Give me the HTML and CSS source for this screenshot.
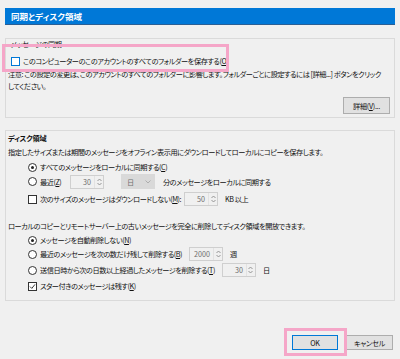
FILE: index.html
```html
<!DOCTYPE html>
<html lang="ja">
<head>
    <meta charset="UTF-8">
    <title>同期とディスク領域</title>
    <link rel="stylesheet" href="styles.css">
</head>
<body>
    <div class="dialog">
        <div class="titlebar">同期とディスク領域</div>

        <!-- メッセージの同期 -->
        <section class="panel panel-sync">
            <div class="panel-title indent">メッセージの同期</div>
            <div class="row check-row indent">
                <span class="checkbox focus"></span>
                <span>このコンピューターのこのアカウントのすべてのフォルダーを保存する(<u>O</u>)</span>
            </div>
            <p class="note">注意: この設定の変更は、このアカウントのすべてのフォルダーに影響します。フォルダーごとに設定するには [詳細...] ボタンをクリック<br>してください。</p>
            <div class="actions">
                <button class="btn">詳細(<u>V</u>)...</button>
            </div>
        </section>

        <!-- ディスク領域 -->
        <section class="panel panel-disk">
            <div class="panel-title bold">ディスク領域</div>
            <div class="line">指定したサイズまたは期間のメッセージをオフライン表示用にダウンロードしてローカルにコピーを保存します。</div>

            <div class="row opt opt-first">
                <span class="radio checked"></span>
                <span>すべてのメッセージをローカルに同期する(<u>C</u>)</span>
            </div>
            <div class="row opt opt-recent">
                <span class="radio"></span>
                <span class="lbl-recent">最近(<u>Z</u>)</span>
                <span class="spin"><span class="spin-val">30</span><span class="spin-arrows"><svg width="5" height="8" viewBox="0 0 5 8"><path d="M0.5 3 L2.5 1 L4.5 3 M0.5 5 L2.5 7 L4.5 5" fill="none" stroke="#8a8a8a" stroke-width="0.9"/></svg></span></span>
                <span class="combo">日<svg width="6" height="4" viewBox="0 0 6 4"><path d="M0.5 0.5 L3 3 L5.5 0.5" fill="none" stroke="#a8a8a8" stroke-width="0.9"/></svg></span>
                <span class="after-combo">分のメッセージをローカルに同期する</span>
            </div>
            <div class="row opt opt-size">
                <span class="checkbox"></span>
                <span>次のサイズのメッセージはダウンロードしない(<u>M</u>):</span>
                <span class="spin"><span class="spin-val">50</span><span class="spin-arrows"><svg width="5" height="8" viewBox="0 0 5 8"><path d="M0.5 3 L2.5 1 L4.5 3 M0.5 5 L2.5 7 L4.5 5" fill="none" stroke="#8a8a8a" stroke-width="0.9"/></svg></span></span>
                <span class="unit">KB 以上</span>
            </div>

            <div class="line line-purge">ローカルのコピーとリモートサーバー上の古いメッセージを完全に削除してディスク領域を開放できます。</div>

            <div class="row opt">
                <span class="radio checked"></span>
                <span>メッセージを自動削除しない(<u>N</u>)</span>
            </div>
            <div class="row opt opt-keep">
                <span class="radio"></span>
                <span>最近のメッセージを次の数だけ残して削除する(<u>B</u>)</span>
                <span class="spin spin-gap"><span class="spin-val">2000</span><span class="spin-arrows"><svg width="5" height="8" viewBox="0 0 5 8"><path d="M0.5 3 L2.5 1 L4.5 3 M0.5 5 L2.5 7 L4.5 5" fill="none" stroke="#8a8a8a" stroke-width="0.9"/></svg></span></span>
                <span class="unit">週</span>
            </div>
            <div class="row opt opt-days">
                <span class="radio"></span>
                <span>送信日時から次の日数以上経過したメッセージを削除する(<u>T</u>)</span>
                <span class="spin spin-gap"><span class="spin-val">30</span><span class="spin-arrows"><svg width="5" height="8" viewBox="0 0 5 8"><path d="M0.5 3 L2.5 1 L4.5 3 M0.5 5 L2.5 7 L4.5 5" fill="none" stroke="#8a8a8a" stroke-width="0.9"/></svg></span></span>
                <span class="unit">日</span>
            </div>
            <div class="row opt opt-star">
                <span class="checkbox"><svg width="7" height="7" viewBox="0 0 7 7"><path d="M1 3.6 L2.8 5.4 L6 1.4" fill="none" stroke="#222" stroke-width="0.9"/></svg></span>
                <span>スター付きのメッセージは残す(<u>K</u>)</span>
            </div>
        </section>

        <div class="footer">
            <button class="btn btn-default">OK</button>
            <button class="btn">キャンセル</button>
        </div>

        <!-- 注目枠 -->
        <div class="highlight hl-sync"></div>
        <div class="highlight hl-ok"></div>
    </div>
</body>
</html>
```

FILE: styles.css
```css
:root {
    --bg-color: #f0f0f0;
    --accent-color: #0078d7;
    --border-color: #dadada;
    --text-color: #111;
    --pink: #f5a6c8;
}

body {
    margin: 0;
    background-color: var(--bg-color);
    color: var(--text-color);
    font-family: "Noto Sans CJK JP", "Noto Sans", sans-serif;
    font-size: 7.2px;
    letter-spacing: -0.45px;
    font-feature-settings: "palt";
}

.dialog {
    position: relative;
    width: 400px;
    height: 359px;
    padding: 8px 5px 0;
    box-sizing: border-box;
}

.titlebar {
    height: 17px;
    line-height: 17px;
    padding-left: 6px;
    background-color: var(--accent-color);
    border-bottom: 1px solid #2a5f95;
    box-sizing: border-box;
    color: white;
    font-weight: bold;
    font-size: 8.5px;
    letter-spacing: 0;
}

.panel {
    border: 1px solid var(--border-color);
    padding: 0 4px 0 2px;
}

.panel-sync {
    margin-top: 13px;
    height: 80px;
    box-sizing: border-box;
}

.panel-disk {
    margin-top: 12px;
    height: 171px;
    box-sizing: border-box;
}

.panel-title {
    line-height: 11px;
}

.panel-disk .panel-title {
    line-height: 14px;
}

.bold {
    font-weight: bold;
    letter-spacing: -0.2px;
}

.indent {
    margin-left: 3px;
}

.row {
    display: flex;
    align-items: center;
    gap: 3px;
    height: 14px;
    white-space: nowrap;
}

.check-row {
    margin-top: 4px;
}

.note {
    margin: 0;
    line-height: 12px;
    white-space: nowrap;
}

.actions {
    display: flex;
    justify-content: flex-end;
    margin-top: 5px;
}

.line {
    line-height: 14px;
    white-space: nowrap;
}

.line-purge {
    margin-top: 13px;
}

.opt {
    margin-left: 20px;
}

.opt-first {
    margin-top: 1px;
}

.opt-recent {
    height: 15px;
}

.opt-size {
    margin-top: 3px;
}

.opt-days,
.opt-star {
    margin-top: 2px;
}

.checkbox {
    display: inline-flex;
    align-items: center;
    justify-content: center;
    width: 7px;
    height: 7px;
    border: 1px solid #333;
    background: white;
    box-sizing: content-box;
    flex-shrink: 0;
}

.checkbox.focus {
    border-color: var(--accent-color);
}

.radio {
    position: relative;
    width: 7px;
    height: 7px;
    border: 1px solid #333;
    border-radius: 50%;
    background: white;
    flex-shrink: 0;
}

.radio.checked::after {
    content: "";
    position: absolute;
    left: 2px;
    top: 2px;
    width: 3px;
    height: 3px;
    border-radius: 50%;
    background: #222;
}

.spin {
    display: inline-flex;
    align-items: stretch;
    width: 34px;
    height: 14px;
    border: 1px solid #cfcfcf;
    box-sizing: border-box;
    color: #6d6d6d;
    letter-spacing: 0;
}

.spin-val {
    flex-grow: 1;
    text-align: right;
    line-height: 12px;
    padding-right: 3px;
}

.spin-arrows {
    display: flex;
    align-items: center;
    justify-content: center;
    width: 8px;
    border-left: 1px solid #e2e2e2;
}

.spin-gap {
    margin-left: 4px;
}

.lbl-recent {
    width: 27px;
}

.combo {
    display: inline-flex;
    align-items: center;
    justify-content: space-between;
    width: 34px;
    height: 15px;
    margin-left: 14px;
    padding: 0 4px 0 6px;
    box-sizing: border-box;
    background-color: #d9d9d9;
    color: #707070;
}

.after-combo {
    margin-left: 5px;
}

.unit {
    margin-left: 4px;
}

.btn {
    font-family: inherit;
    font-size: 7.2px;
    letter-spacing: -0.3px;
    font-feature-settings: "palt";
    height: 17px;
    width: 47px;
    padding: 0;
    background-color: #e1e1e1;
    border: 1px solid #adadad;
    color: var(--text-color);
}

.footer {
    display: flex;
    justify-content: flex-end;
    gap: 8px;
    margin-top: 34px;
    margin-right: 2px;
}

.footer .btn {
    height: 15px;
}

.btn-default {
    width: 46px;
    border-color: var(--accent-color);
}

.highlight {
    position: absolute;
    border: 3px solid var(--pink);
    box-sizing: border-box;
    pointer-events: none;
}

.hl-sync {
    left: 2px;
    top: 44px;
    width: 227px;
    height: 28px;
}

.hl-ok {
    left: 284px;
    top: 328px;
    width: 63px;
    height: 28px;
}
```
